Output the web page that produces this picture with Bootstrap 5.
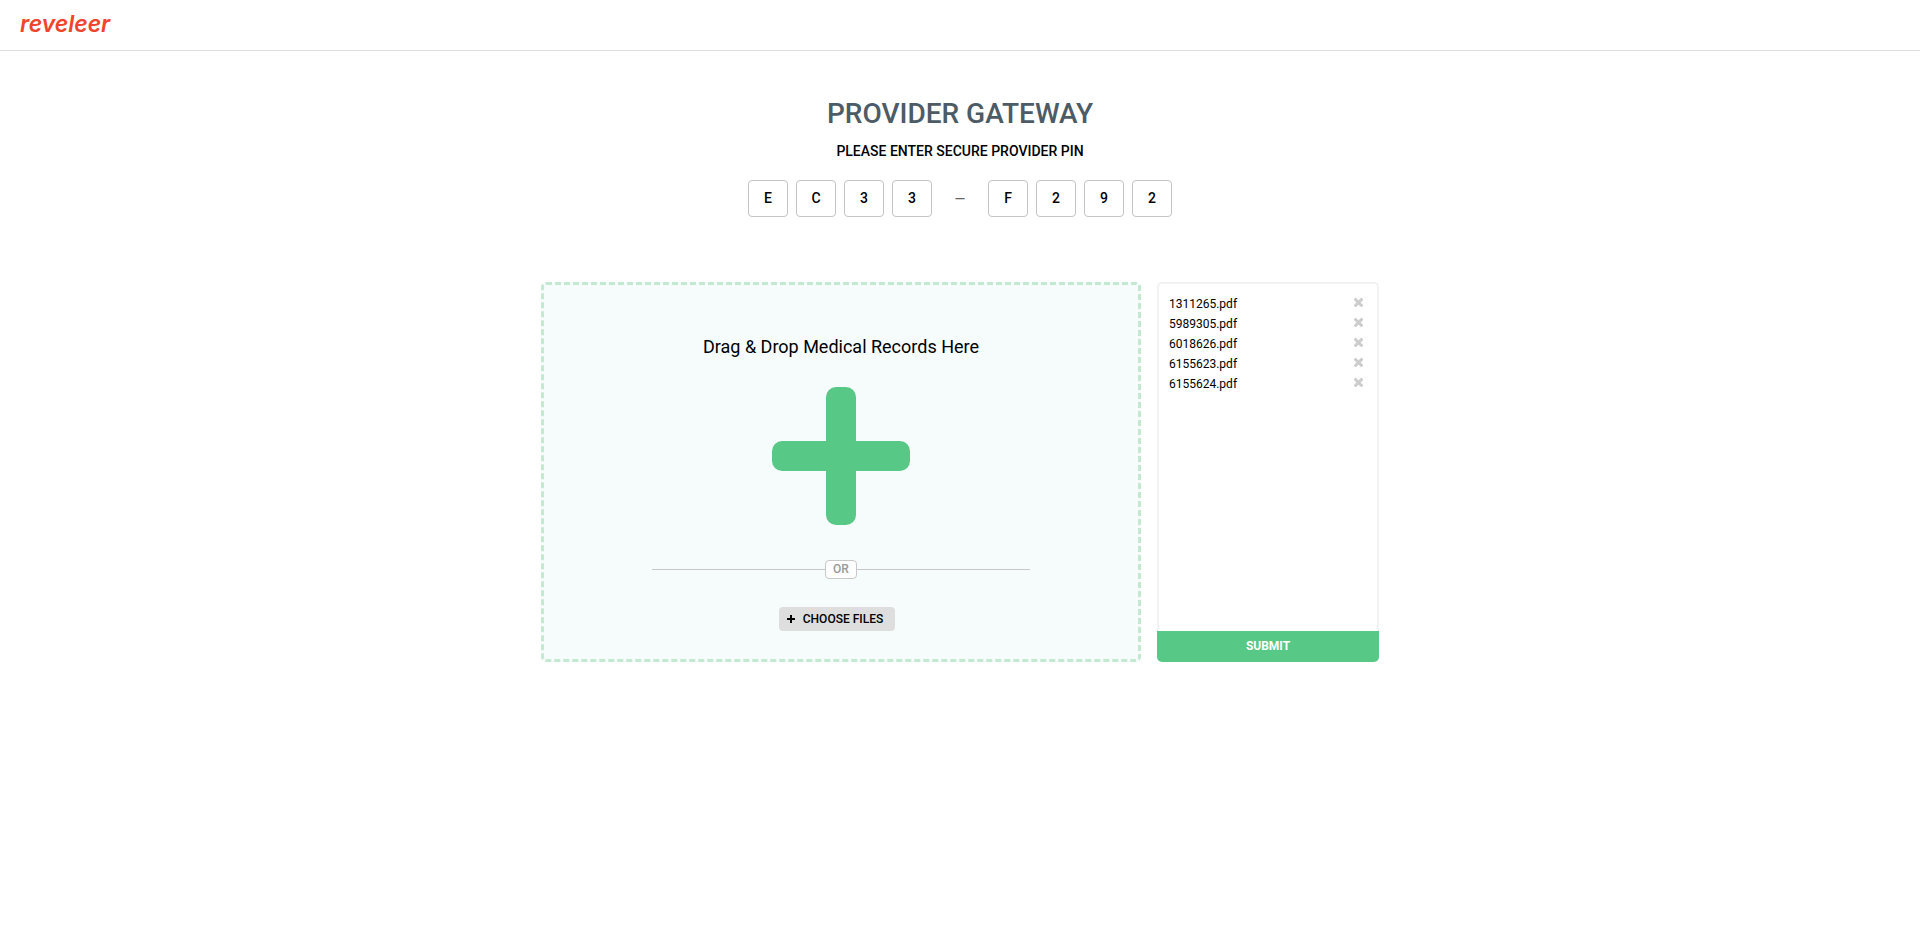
<!DOCTYPE html>
<html lang="en">
<head>
<meta charset="utf-8">
<meta name="viewport" content="width=device-width, initial-scale=1">
<title>Provider Gateway</title>
<link href="https://cdn.jsdelivr.net/npm/bootstrap@5.3.0/dist/css/bootstrap.min.css" rel="stylesheet">
<style>
  body { font-family: Roboto, "Liberation Sans", sans-serif; font-size: 12px; line-height: 20px; color: #000; background: #fff; }
  .topbar { height: 51px; border-bottom: 1px solid #e0e0e0; padding: 0 20px 2px; }
  .brand { font: italic 600 23px/32px Inter, sans-serif; color: #f0452c; }
  .gateway { padding-top: 45px; }
  .gateway h1 { font-size: 28px; line-height: 36px; font-weight: 500; color: #4d5b66; margin: 0 0 9px; }
  .pin-label { font-size: 14px; line-height: 20px; font-weight: 500; margin: 0 0 19px; }
  .pin-box { width: 40px; height: 37px; border: 1px solid #c4c4c4; border-radius: 4px; text-align: center; font-size: 14px; font-weight: 500; padding: 0 0 2px; color: #000; background: #fff; }
  .pin-dash { width: 40px; font-size: 14px; color: #666; }
  .uploader { max-width: 838px; margin-top: 65px; gap: 16px; }
  .dropzone { min-height: 380px; border: 3px dashed #c3e9d0; border-radius: 5px; background: #f6fcfc; padding: 50px 20px 28px; }
  .drop-title { font-size: 18px; line-height: 24px; margin: 0 0 28px; }
  .divider { width: 378px; max-width: 100%; margin: 35px 0 28px; }
  .divider-line { height: 1px; background: #c8c8c8; }
  .divider-text { width: 32px; height: 19px; line-height: 17px; border: 1px solid #c8c8c8; border-radius: 4px; background: #fff; color: #999; font-weight: 500; text-align: center; }
  .choose { height: 24px; padding: 0 12px 0 8px; margin-right: 8px; border: 0; border-radius: 4px; background: #dedede; color: #000; font-size: 12px; font-weight: 500; line-height: 24px; gap: 8px; }
  .files { width: 222px; }
  .file-list { border: 2px solid #f2f2f2; border-bottom: 0; border-radius: 5px 5px 0 0; padding: 10px 13px 10px 10px; }
  .remove { border: 0; background: none; padding: 0 0 4px; color: #ccc; line-height: 0; }
  .submit { height: 31px; padding: 0 0 2px; border: 0; border-radius: 0 0 5px 5px; background: #58c886; color: #fff; font-size: 12px; font-weight: 700; line-height: 28px; }
</style>
</head>
<body>
<svg class="d-none">
  <symbol id="cross" viewBox="0 0 10 10"><path d="M1.700 2.700l5.600 5.600M7.300 2.700l-5.600 5.600" stroke="currentColor" stroke-width="3" stroke-linecap="square"/></symbol>
</svg>
<header class="topbar d-flex align-items-center">
  <a href="#" class="brand text-decoration-none">reveleer</a>
</header>
<main class="gateway container-fluid d-flex flex-column align-items-center">
  <h1>PROVIDER GATEWAY</h1>
  <p class="pin-label" id="pin-label">PLEASE ENTER SECURE PROVIDER PIN</p>
  <div class="d-flex align-items-center gap-2" role="group" aria-labelledby="pin-label">
    <input class="pin-box" maxlength="1" value="E" aria-label="PIN character 1">
    <input class="pin-box" maxlength="1" value="C" aria-label="PIN character 2">
    <input class="pin-box" maxlength="1" value="3" aria-label="PIN character 3">
    <input class="pin-box" maxlength="1" value="3" aria-label="PIN character 4">
    <span class="pin-dash text-center">—</span>
    <input class="pin-box" maxlength="1" value="F" aria-label="PIN character 5">
    <input class="pin-box" maxlength="1" value="2" aria-label="PIN character 6">
    <input class="pin-box" maxlength="1" value="9" aria-label="PIN character 7">
    <input class="pin-box" maxlength="1" value="2" aria-label="PIN character 8">
  </div>
  <div class="uploader d-flex w-100">
    <section class="dropzone flex-fill d-flex flex-column align-items-center">
      <p class="drop-title">Drag &amp; Drop Medical Records Here</p>
      <svg width="138" height="138" viewBox="0 0 138 138" fill="#58c886" aria-hidden="true">
        <rect x="54" width="30" height="138" rx="10"/>
        <rect y="54" width="138" height="30" rx="10"/>
      </svg>
      <div class="divider d-flex align-items-center">
        <span class="divider-line flex-grow-1"></span>
        <span class="divider-text">OR</span>
        <span class="divider-line flex-grow-1"></span>
      </div>
      <button type="button" class="choose d-flex align-items-center">
        <svg width="8" height="8" viewBox="0 0 8 8" aria-hidden="true"><path d="M4 0v8M0 4h8" stroke="#000" stroke-width="2"/></svg>
        CHOOSE FILES
      </button>
    </section>
    <section class="files flex-shrink-0 d-flex flex-column">
      <ul class="file-list list-unstyled mb-0 flex-grow-1">
        <li class="d-flex align-items-center justify-content-between">1311265.pdf <button type="button" class="remove" aria-label="Remove 1311265.pdf"><svg width="10" height="10"><use href="#cross"/></svg></button></li>
        <li class="d-flex align-items-center justify-content-between">5989305.pdf <button type="button" class="remove" aria-label="Remove 5989305.pdf"><svg width="10" height="10"><use href="#cross"/></svg></button></li>
        <li class="d-flex align-items-center justify-content-between">6018626.pdf <button type="button" class="remove" aria-label="Remove 6018626.pdf"><svg width="10" height="10"><use href="#cross"/></svg></button></li>
        <li class="d-flex align-items-center justify-content-between">6155623.pdf <button type="button" class="remove" aria-label="Remove 6155623.pdf"><svg width="10" height="10"><use href="#cross"/></svg></button></li>
        <li class="d-flex align-items-center justify-content-between">6155624.pdf <button type="button" class="remove" aria-label="Remove 6155624.pdf"><svg width="10" height="10"><use href="#cross"/></svg></button></li>
      </ul>
      <button type="submit" class="submit w-100">SUBMIT</button>
    </section>
  </div>
</main>
<script src="https://cdn.jsdelivr.net/npm/bootstrap@5.3.0/dist/js/bootstrap.bundle.min.js"></script>
</body>
</html>
